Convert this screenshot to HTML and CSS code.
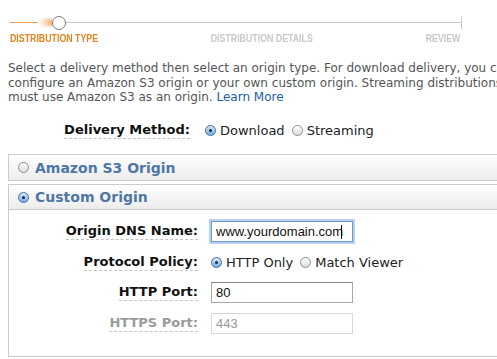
FILE: index.html
```html
<html>
<head>
<meta name="viewport" content="width=device-width, initial-scale=1">
<title>Create Distribution</title>
<link rel="stylesheet" href="styles.css">
</head>
<body>
    <div class="wizard">
        <div class="track">
            <span class="track-done"></span>
            <span class="track-glow"></span>
            <span class="track-dot"></span>
            <span class="track-todo"></span>
            <span class="track-end"></span>
        </div>
        <div class="steps">
            <span class="step first current">DISTRIBUTION TYPE</span>
            <span class="step middle">DISTRIBUTION DETAILS</span>
            <span class="step last">REVIEW</span>
        </div>
    </div>

    <p class="intro">
        Select a delivery method then select an origin type. For download delivery, you can<br>
        configure an Amazon S3 origin or your own custom origin. Streaming distributions<br>
        must use Amazon S3 as an origin. <a href="#">Learn More</a>
    </p>

    <div class="delivery">
        <div class="label-col"><span class="label">Delivery Method:</span></div>
        <div class="choices">
            <span class="radio checked"></span><span class="choice">Download</span>
            <span class="radio"></span><span class="choice">Streaming</span>
        </div>
    </div>

    <div class="panel">
        <div class="panel-head"><span class="radio"></span>Amazon S3 Origin</div>
    </div>

    <div class="panel open">
        <div class="panel-head"><span class="radio checked"></span>Custom Origin</div>
        <div class="panel-body">
            <div class="row">
                <div class="label-col"><span class="label">Origin DNS Name:</span></div>
                <span class="field">
                    <input class="text focus" type="text" value="www.yourdomain.com">
                    <span class="caret"></span>
                </span>
            </div>
            <div class="row">
                <div class="label-col"><span class="label">Protocol Policy:</span></div>
                <div class="choices">
                    <span class="radio checked"></span><span class="choice">HTTP Only</span>
                    <span class="radio"></span><span class="choice">Match Viewer</span>
                </div>
            </div>
            <div class="row">
                <div class="label-col"><span class="label">HTTP Port:</span></div>
                <input class="text" type="text" value="80">
            </div>
            <div class="row disabled">
                <div class="label-col"><span class="label">HTTPS Port:</span></div>
                <input class="text" type="text" value="443" disabled>
            </div>
        </div>
    </div>
</body>
</html>
```

FILE: styles.css
```css
html, body {
    overflow: hidden;
}
body {
    margin: 0;
    padding: 0;
    background: white;
    color: #555;
    font-family: "DejaVu Sans", Verdana, sans-serif;
    font-size: 12px;
}

/* wizard progress */
.wizard {
    width: 452px;
    margin-left: 10px;
    padding-top: 15px;
}
.track {
    display: flex;
    align-items: center;
    height: 15px;
}
.track-done {
    width: 28px;
    height: 1px;
    background: #f0a24c;
}
.track-glow {
    width: 14px;
    height: 11px;
    background: linear-gradient(to right, rgba(250, 190, 120, 0), rgba(248, 160, 80, 0.8));
    -webkit-mask-image: linear-gradient(to bottom, transparent, black 35%, black 65%, transparent);
    mask-image: linear-gradient(to bottom, transparent, black 35%, black 65%, transparent);
}
.track-dot {
    width: 14px;
    height: 14px;
    border: 1.5px solid #7a7a7a;
    border-radius: 50%;
    background: white;
    box-sizing: border-box;
    flex: none;
}
.track-todo {
    flex: 1;
    height: 1px;
    background: #c8c8c8;
}
.track-end {
    width: 1px;
    height: 13px;
    background: #c8c8c8;
}
.steps {
    display: flex;
    justify-content: space-between;
    width: 450px;
    margin-top: 2px;
    font-family: "Liberation Sans", Arial, sans-serif;
    font-size: 11px;
    line-height: 13px;
    font-weight: bold;
    color: #c8c8c8;
}
.step {
    display: inline-block;
    transform: scaleX(0.8);
}
.step.first {
    transform-origin: left center;
}
.step.middle {
    margin-right: 14px;
}
.step.last {
    transform-origin: right center;
}
.step.current {
    color: #e8821e;
}

/* intro text */
.intro {
    margin: 16px 0 0 8px;
    line-height: 14.7px;
    white-space: nowrap;
    color: #555;
}
.intro a {
    color: #1d5ca5;
    text-decoration: none;
}

/* label + control rows */
.label-col {
    flex: none;
    text-align: right;
}
.label {
    display: inline-block;
    font-size: 13px;
    font-weight: bold;
    color: #111;
    border-bottom: 1px dashed #c4c4c4;
    line-height: 16px;
}
.choices {
    display: flex;
    align-items: center;
    font-size: 13px;
    color: #222;
}
.choice {
    margin: 0 7px 0 4px;
}
.radio {
    display: inline-block;
    flex: none;
    width: 11px;
    height: 11px;
    border: 1px solid #8c8c8c;
    border-radius: 50%;
    background: linear-gradient(to bottom, #ffffff, #dcdcdc);
    box-sizing: border-box;
    position: relative;
}
.radio.checked {
    border-color: #3b6eaa;
    background: linear-gradient(to bottom, #d5e6f8, #79aee4);
}
.radio.checked::after {
    content: "";
    position: absolute;
    left: 3px;
    top: 3px;
    width: 3px;
    height: 3px;
    border-radius: 50%;
    background: #1b2c44;
}

.delivery {
    display: flex;
    align-items: center;
    margin-top: 17px;
}
.delivery .label-col {
    width: 190px;
}
.delivery .choices {
    margin-left: 15px;
}

/* origin panels */
.panel {
    width: 600px;
    margin: 0 0 3px 8px;
    border: 1px solid #cccccc;
}
.delivery + .panel {
    margin-top: 15px;
}
.panel-head {
    display: flex;
    align-items: center;
    height: 25px;
    padding-left: 9px;
    background: linear-gradient(to bottom, #ffffff, #ececec);
    font-size: 14px;
    font-weight: bold;
    color: #4f77a6;
}
.panel-head .radio {
    margin-right: 6px;
}
.panel.open .panel-head {
    height: 24px;
    border-bottom: 1px solid #cccccc;
}
.panel-body {
    padding: 11px 0 22px;
    display: flex;
    flex-direction: column;
    gap: 9.5px;
}
.row {
    display: flex;
    align-items: center;
    height: 21px;
}
.row .label-col {
    width: 189px;
}
.row .choices {
    margin-left: 13px;
}
.row .choice {
    margin-left: 4px;
}
.field {
    position: relative;
    display: inline-block;
    margin-left: 13px;
    height: 21px;
}
.row > .text {
    margin-left: 13px;
}
.text {
    width: 142px;
    height: 21px;
    box-sizing: border-box;
    margin: 0;
    padding: 0 4px;
    border: 1px solid #a8a8a8;
    border-top-color: #888;
    font-family: "Liberation Sans", Arial, sans-serif;
    font-size: 13px;
    color: #111;
    background: white;
}
.text.focus {
    border-color: #6d9bd1;
    box-shadow: 0 0 0 2px #b7d0ef;
}
.caret {
    position: absolute;
    left: 130px;
    top: 4px;
    width: 1px;
    height: 14px;
    background: #000;
}
.row.disabled .label {
    color: #9a9a9a;
}
.row.disabled .text {
    border-color: #d8d8d8;
    color: #999;
    background: white;
}
```
